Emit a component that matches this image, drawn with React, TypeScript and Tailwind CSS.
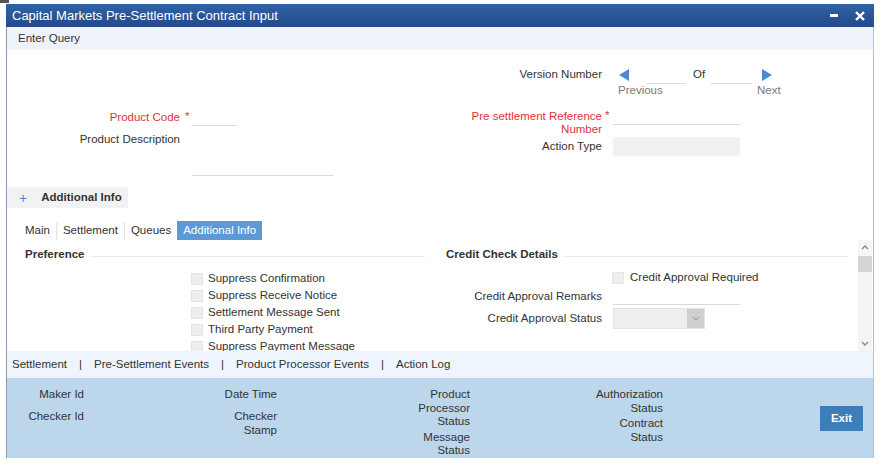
const FONT = "font-['Liberation_Sans',Arial,sans-serif]";

function Arrow({ dir }: { dir: "left" | "right" }) {
  return (
    <svg width="12" height="12" viewBox="0 0 12 12">
      {dir === "left" ? (
        <polygon points="11,0 11,12 1,6" fill="#4a8bd2" />
      ) : (
        <polygon points="1,0 1,12 11,6" fill="#4a8bd2" />
      )}
    </svg>
  );
}

function Chevron({ up, color = "#888" }: { up?: boolean; color?: string }) {
  return (
    <svg width="8" height="6" viewBox="0 0 8 6">
      <polyline
        points={up ? "1,5 4,2 7,5" : "1,1 4,4 7,1"}
        fill="none"
        stroke={color}
        strokeWidth="1.4"
      />
    </svg>
  );
}

function Check({ label }: { label: string }) {
  return (
    <div className="flex h-[17px] items-center">
      <div className="ml-[166px] h-[12px] w-[12px] border border-[#e4e4e4] bg-[#eeeeee]" />
      <span className="ml-[5px] whitespace-nowrap">{label}</span>
    </div>
  );
}

function Field({ lines }: { lines: string[] }) {
  return (
    <div className="min-h-[22px] w-[77px] pb-[2px] text-right leading-[13.5px]">
      {lines.map((l, i) => (
        <div key={i} className="whitespace-nowrap">
          {l}
        </div>
      ))}
    </div>
  );
}

export default function App() {
  return (
    <div className={`relative h-[466px] w-[882px] overflow-hidden bg-white text-[11.5px] text-[#333] ${FONT}`}>
      <div className="h-[4px]">
        <div className="h-[3px] w-[9px] bg-[#555]" />
      </div>
      <div className="ml-[6px] w-[868px]">
        {/* title bar */}
        <div className="flex h-[23px] items-center bg-gradient-to-b from-[#3162a6] to-[#224b8a] pl-[6px] text-[13px] text-white">
          <span>Capital Markets Pre-Settlement Contract Input</span>
          <div className="ml-auto flex items-center">
            <div className="h-[3px] w-[8px] bg-white" />
            <svg className="ml-[17px] mr-[9px]" width="10" height="10" viewBox="0 0 10 10">
              <path d="M1 1 L9 9 M9 1 L1 9" stroke="#fff" strokeWidth="2.4" />
            </svg>
          </div>
        </div>

        <div className="border-x border-l-[#8a99ae] border-r-[#b2c1d4]">
          {/* toolbar */}
          <div className="flex h-[23px] items-center bg-[#eef3fb] pl-[11px]">Enter Query</div>

          {/* header form */}
          <div className="flex h-[137px]">
            <div className="w-[424px]">
              <div className="mt-[60px] flex h-[16px] items-center">
                <div className="w-[173px] text-right text-[#e0323c]">Product Code</div>
                <div className="w-[12px] self-start pl-[5px] leading-[12px] text-[#e0323c]">*</div>
                <div className="h-[16px] w-[45px] border-b border-[#dadada]" />
              </div>
              <div className="mt-[5px] flex">
                <div className="h-[16px] w-[173px] text-right leading-[16px]">Product Description</div>
                <div className="w-[12px]" />
                <div className="h-[45px] w-[141px] border-b border-[#dadada]" />
              </div>
            </div>
            <div className="flex-1">
              <div className="mt-[17px] flex h-[16px] items-center">
                <div className="w-[171px] text-right">Version Number</div>
                <div className="w-[11px]" />
                <div className="ml-[5px]">
                  <Arrow dir="left" />
                </div>
                <div className="ml-[17px] h-[17px] w-[39px] self-start border-b border-[#dadada]" />
                <div className="ml-[7px] w-[18px]">Of</div>
                <div className="h-[17px] w-[41px] self-start border-b border-[#dadada]" />
                <div className="ml-[9px]">
                  <Arrow dir="right" />
                </div>
              </div>
              <div className="flex h-[16px] items-center text-[#7a7a7a]">
                <div className="ml-[187px] w-[139px]">Previous</div>
                <div>Next</div>
              </div>
              <div className="mt-[11px] flex">
                <div className="w-[171px] text-right leading-[13px] text-[#e0323c]">
                  <div>Pre settlement Reference</div>
                  <div>Number</div>
                </div>
                <div className="w-[11px] pl-[3px] leading-[10px] text-[#e0323c]">*</div>
                <div className="h-[15px] w-[127px] border-b border-[#dadada]" />
              </div>
              <div className="mt-px flex h-[19px] items-center">
                <div className="w-[171px] text-right">Action Type</div>
                <div className="w-[11px]" />
                <div className="h-[19px] w-[127px] bg-[#f1f1f1]" />
              </div>
            </div>
          </div>

          {/* additional info header */}
          <div className="flex h-[21px] w-[121px] items-center bg-[#f1f2f4] pl-[12px]">
            <span className="text-[14px] leading-none text-[#4a8bd2]">+</span>
            <span className="ml-[14px] font-bold">Additional Info</span>
          </div>

          {/* tabs */}
          <div className="mt-[13px] flex h-[19px] items-center pl-[12px]">
            <div className="px-[6px]">Main</div>
            <div className="h-[18px] w-px bg-[#e2e2e2]" />
            <div className="px-[6px]">Settlement</div>
            <div className="h-[18px] w-px bg-[#e2e2e2]" />
            <div className="pl-[6px] pr-[6px]">Queues</div>
            <div className="flex h-[19px] items-center bg-[#5b9ad7] px-[6px] text-white">Additional Info</div>
          </div>

          {/* tab content */}
          <div className="flex h-[111px]">
            <div className="flex flex-1 overflow-hidden pt-[7px]">
              <div className="ml-[18px] w-[400px]">
                <div className="flex h-[16px] items-center">
                  <span className="font-bold">Preference</span>
                  <div className="ml-[6px] mt-[2px] h-px flex-1 bg-[#ececec]" />
                </div>
                <div className="mt-[7px]">
                  <Check label="Suppress Confirmation" />
                  <Check label="Suppress Receive Notice" />
                  <Check label="Settlement Message Sent" />
                  <Check label="Third Party Payment" />
                  <Check label="Suppress Payment Message" />
                </div>
              </div>
              <div className="ml-[21px] w-[402px]">
                <div className="flex h-[16px] items-center">
                  <span className="font-bold">Credit Check Details</span>
                  <div className="ml-[6px] mt-[2px] h-px flex-1 bg-[#ececec]" />
                </div>
                <div className="mt-[6px]">
                  <div className="flex h-[17px] items-center">
                    <div className="ml-[166px] h-[12px] w-[12px] border border-[#e4e4e4] bg-[#eeeeee]" />
                    <span className="ml-[6px]">Credit Approval Required</span>
                  </div>
                  <div className="mt-[3px] flex h-[16px] items-center">
                    <div className="w-[156px] text-right">Credit Approval Remarks</div>
                    <div className="ml-[11px] h-[16px] w-[127px] border-b border-[#dadada]" />
                  </div>
                  <div className="mt-[3px] flex h-[21px] items-center">
                    <div className="w-[156px] text-right">Credit Approval Status</div>
                    <div className="ml-[11px] flex h-[21px] w-[92px] justify-end border border-[#e4e4e4] bg-[#efefef]">
                      <div className="flex w-[17px] items-center justify-center bg-[#cfcfcf]">
                        <Chevron color="#aaa" />
                      </div>
                    </div>
                  </div>
                </div>
              </div>
            </div>
            <div className="mr-px flex w-[14px] flex-col items-center bg-[#f5f5f5]">
              <div className="flex h-[13px] items-center">
                <Chevron up />
              </div>
              <div className="mt-[3px] h-[16px] w-[14px] bg-[#d5d5d5]" />
              <div className="flex-1" />
              <div className="flex h-[14px] items-center">
                <Chevron />
              </div>
            </div>
          </div>

          {/* link bar */}
          <div className="flex h-[27px] items-center bg-[#eff5fc] pl-[5px]">
            <span>Settlement</span>
            <span className="mx-[12px]">|</span>
            <span>Pre-Settlement Events</span>
            <span className="mx-[12px]">|</span>
            <span>Product Processor Events</span>
            <span className="mx-[12px]">|</span>
            <span>Action Log</span>
          </div>

          {/* footer */}
          <div className="flex h-[80px] bg-[#bcd6ec] pt-[10px]">
            <div className="w-[193px]">
              <Field lines={["Maker Id"]} />
              <Field lines={["Checker Id"]} />
            </div>
            <div className="w-[193px]">
              <Field lines={["Date Time"]} />
              <Field lines={["Checker", "Stamp"]} />
            </div>
            <div className="w-[193px]">
              <Field lines={["Product", "Processor", "Status"]} />
              <Field lines={["Message", "Status"]} />
            </div>
            <div className="w-[193px]">
              <Field lines={["Authorization", "Status"]} />
              <Field lines={["Contract", "Status"]} />
            </div>
            <div className="ml-auto mr-[10px] mt-[18px] flex h-[25px] w-[43px] items-center justify-center bg-[#3b7eb9] font-bold text-white">
              Exit
            </div>
          </div>
        </div>
      </div>
    </div>
  );
}
